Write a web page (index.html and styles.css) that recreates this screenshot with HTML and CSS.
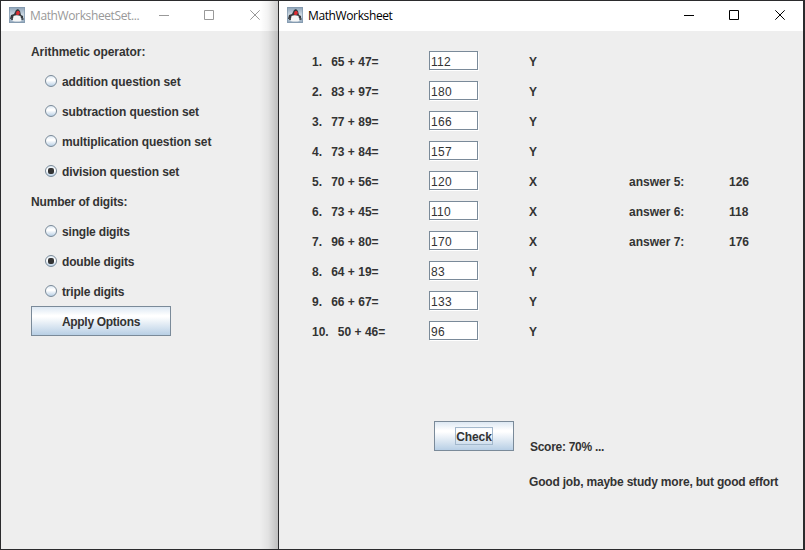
FILE: index.html
```html
<!DOCTYPE html>
<html lang="en">
<head>
<meta charset="utf-8">
<title>MathWorksheet</title>
<link rel="stylesheet" href="styles.css">
</head>
<body>
<svg width="0" height="0" class="defs" aria-hidden="true">
  <defs>
    <linearGradient id="tile" x1="0" y1="0" x2="0" y2="1"><stop offset="0" stop-color="#8ba0b5"/><stop offset=".5" stop-color="#cfdbe5"/><stop offset="1" stop-color="#8fa5ba"/></linearGradient>
    <symbol id="java" viewBox="0 0 16 16">
      <rect width="16" height="16" fill="url(#tile)"/>
      <path d="M.5.5h15v15H.5z" fill="none" stroke="#7f95ab" opacity=".7"/>
      <path d="M2 8l3-1 2-4 2-1 2 2 1 4 2 1v3l-2-1H5l-1 1H1z" fill="#35393d"/>
      <path d="M4.500 9q3-1.500 7 0l1 5q-4 1-9 0z" fill="#f5f6f6"/>
      <path d="M2 11h2v2H2zM12.500 11h2v2h-2z" fill="#4a5057"/>
      <path d="M8 4h2l1 2-1.500 2h-2L7 6z" fill="#dc2c32"/>
    </symbol>
    <symbol id="min" viewBox="0 0 11 11"><path d="M0 5.500h10" stroke="currentColor"/></symbol>
    <symbol id="max" viewBox="0 0 11 11"><path d="M.5.5h9v9h-9z" fill="none" stroke="currentColor"/></symbol>
    <symbol id="close" viewBox="0 0 11 11"><path d="m.3.300 9.400 9.400m0-9.400L.3 9.700" stroke="currentColor" fill="none"/></symbol>
  </defs>
</svg>
<div class="desktop">
  <section class="window settings">
    <header class="titlebar inactive">
      <svg class="app-icon"><use href="#java"/></svg>
      <span class="title">MathWorksheetSet...</span>
      <div class="controls"><svg><use href="#min"/></svg><svg><use href="#max"/></svg><svg><use href="#close"/></svg></div>
    </header>
    <div class="options">
      <div class="heading operator">Arithmetic operator:</div>
      <div class="option"><i class="radio"></i><span>addition question set</span></div>
      <div class="option"><i class="radio"></i><span>subtraction question set</span></div>
      <div class="option"><i class="radio"></i><span>multiplication question set</span></div>
      <div class="option"><i class="radio on"></i><span>division question set</span></div>
      <div class="heading digits">Number of digits:</div>
      <div class="option digits"><i class="radio"></i><span>single digits</span></div>
      <div class="option digits"><i class="radio on"></i><span>double digits</span></div>
      <div class="option digits"><i class="radio"></i><span>triple digits</span></div>
      <button class="button apply">Apply Options</button>
    </div>
  </section>
  <section class="window worksheet">
    <header class="titlebar">
      <svg class="app-icon"><use href="#java"/></svg>
      <span class="title">MathWorksheet</span>
      <div class="controls"><svg><use href="#min"/></svg><svg><use href="#max"/></svg><svg><use href="#close"/></svg></div>
    </header>
    <div class="questions">
      <div class="row"><span class="q">1.  <b>65 + 47=</b></span><span class="field">112</span><span>Y</span></div>
      <div class="row"><span class="q">2.  <b>83 + 97=</b></span><span class="field">180</span><span>Y</span></div>
      <div class="row"><span class="q">3.  <b>77 + 89=</b></span><span class="field">166</span><span>Y</span></div>
      <div class="row"><span class="q">4.  <b>73 + 84=</b></span><span class="field">157</span><span>Y</span></div>
      <div class="row"><span class="q">5.  <b>70 + 56=</b></span><span class="field">120</span><span>X</span><span>answer 5:</span><span>126</span></div>
      <div class="row"><span class="q">6.  <b>73 + 45=</b></span><span class="field">110</span><span>X</span><span>answer 6:</span><span>118</span></div>
      <div class="row"><span class="q">7.  <b>96 + 80=</b></span><span class="field">170</span><span>X</span><span>answer 7:</span><span>176</span></div>
      <div class="row"><span class="q">8.  <b>64 + 19=</b></span><span class="field">83</span><span>Y</span></div>
      <div class="row"><span class="q">9.  <b>66 + 67=</b></span><span class="field">133</span><span>Y</span></div>
      <div class="row"><span class="q">10.  <b>50 + 46=</b></span><span class="field">96</span><span>Y</span></div>
    </div>
    <div class="result">
      <button class="button check"><span class="focus">Check</span></button>
      <div class="score">Score: 70% ...</div>
    </div>
    <div class="message">Good job, maybe study more, but good effort</div>
  </section>
</div>
</body>
</html>
```
FILE: styles.css
```css
* { box-sizing: border-box; }
body { margin: 0; font: bold 12px/14px "Liberation Sans", Arial, sans-serif; color: #333; }
.defs { position: absolute; }
.desktop { display: flex; width: 805px; height: 550px; padding: 1px 2px 1px 1px; background: #2b2b2d; overflow: hidden; }
.window { height: 548px; background: #eee; }
.settings { width: 277px; position: relative; }
.settings::after { content: ""; position: absolute; top: 0; right: 0; bottom: 0; width: 18px; background: linear-gradient(90deg, transparent, rgba(0,0,0,.05) 45%, rgba(0,0,0,.2)); }
.worksheet { width: 524px; margin-left: 1px; }
.titlebar { height: 30px; background: #fff; display: flex; align-items: center; padding: 0 17px 0 8px; color: #000; }
.inactive { color: #999; }
.app-icon { width: 16px; height: 16px; margin-right: 5px; flex: none; position: relative; top: -1px; }
.title { font: 12px/16px "Open Sans", "Noto Sans", sans-serif; letter-spacing: -.38px; white-space: nowrap; }
.controls { margin-left: auto; display: flex; gap: 35px; margin-bottom: 1px; }
.controls svg { width: 11px; height: 11px; }
.controls svg:first-child { margin-right: -1px; }
.options { padding: 6px 0 0 30px; }
.heading, .option { height: 30px; display: flex; align-items: center; white-space: nowrap; }
.operator { letter-spacing: -.05px; }
.option { padding-left: 14px; gap: 5px; letter-spacing: -.1px; }
.digits { letter-spacing: -.18px; }
.radio { width: 12px; height: 12px; margin-bottom: 2px; border: 1px solid #7a8a99; border-radius: 50%; background: linear-gradient(#dde8f3, #fff 35%, #fff 45%, #b8cfe5); display: grid; place-items: center; }
.on::after { content: ""; width: 6px; height: 6px; border-radius: 2px; background: #333; }
.button { height: 30px; padding: 0; border: 1px solid #7a8a99; border-radius: 0; background: linear-gradient(#dde8f3, #fff 30%, #fff 35%, #b8cfe5); font: inherit; color: #333; }
.apply { display: block; width: 140px; margin-top: -1px; padding-top: 1px; letter-spacing: -.3px; }
.questions { padding: 15px 0 0 33px; }
.row { height: 30px; display: grid; grid-template-columns: 117px 100px 100px 100px 60px; align-items: center; white-space: nowrap; padding-top: 1px; }
.q { white-space: pre; }
.q b { margin-left: 2.5px; }
.field { width: 49px; height: 19px; margin-bottom: 2px; border: 1px solid #7a8a99; box-shadow: 1px 1px #fff; background: #fff; padding: 2px 1px; font-weight: normal; line-height: 17px; font-size: 12px; letter-spacing: .3px; }
.result { display: flex; padding: 75px 0 0 155px; }
.check { width: 80px; letter-spacing: -.1px; }
.focus { display: inline-block; height: 18px; padding-top: 1px; line-height: 16px; border: 1px solid #a3b8cc; }
.score { margin: 19px 0 0 16px; letter-spacing: -.28px; }
.message { margin: 21px 0 0 250px; white-space: nowrap; letter-spacing: -.19px; }
```
